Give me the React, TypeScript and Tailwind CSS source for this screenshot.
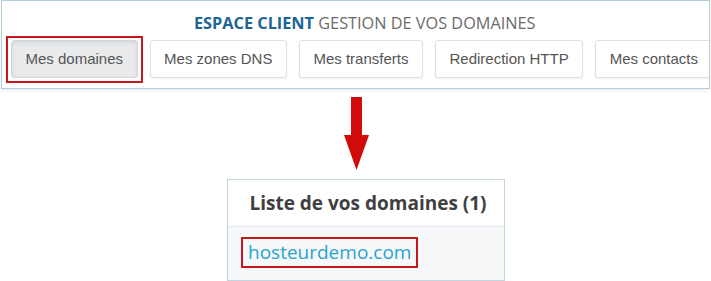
const tabs = [
  { label: 'Mes domaines', active: true },
  { label: 'Mes zones DNS' },
  { label: 'Mes transferts' },
  { label: 'Redirection HTTP' },
  { label: 'Mes contacts' },
];

export default function App() {
  return (
    <div className="relative w-[711px] h-[281px] bg-white overflow-hidden">
      {/* Top panel */}
      <div className="ml-[1px] w-[709px] h-[89px] border border-[#b3ccd9] bg-white overflow-hidden shadow-[0_2px_3px_rgba(0,0,0,0.06)]">
        <div
          className="pl-[192px] pt-[11px] h-[39px] text-[16.3px] leading-[22px] text-[#6b6b6b] whitespace-nowrap"
          style={{ fontFamily: '"Open Sans", sans-serif' }}
        >
          <span className="font-bold text-[#1d6497]">ESPACE CLIENT</span> GESTION DE VOS DOMAINES
        </div>
        <div className="flex items-center gap-[12px] pl-[9px]">
          {tabs.map((t) =>
            t.active ? (
              <div key={t.label} className="shrink-0 -mx-[5px] -mt-[4px] -mb-[5px] pt-[2px] pb-[3px] px-[3px] border-2 border-[#c8161d]">
                <div
                  className="h-[38px] px-[13.5px] flex items-center rounded-[3px] border border-[#cfd5d9] bg-[#e8eaeb] text-[#555] shadow-[inset_0_2px_4px_rgba(0,0,0,0.08)]"
                  style={{ fontFamily: '"Liberation Sans", Arial, sans-serif' }}
                >
                  <span className="text-[15px] whitespace-nowrap">{t.label}</span>
                </div>
              </div>
            ) : (
              <div
                key={t.label}
                className="shrink-0 h-[38px] px-[13.5px] flex items-center rounded-[3px] border border-[#dde1e4] bg-white text-[#555] shadow-[0_1px_2px_rgba(0,0,0,0.06)]"
                style={{ fontFamily: '"Liberation Sans", Arial, sans-serif' }}
              >
                <span className="text-[15px] whitespace-nowrap">{t.label}</span>
              </div>
            )
          )}
        </div>
      </div>

      {/* Arrow */}
      <div className="flex justify-center pl-[3px] pt-[8px]">
        <svg width="26" height="74" viewBox="0 0 26 74">
          <polygon points="7,0 18,0 18,38 25,38 12.5,73 0,38 7,38" fill="#d30a0a" />
        </svg>
      </div>

      {/* Domain list panel */}
      <div
        className="ml-[227px] mt-[8px] w-[278px] h-[102px] border border-[#c4d4de] bg-[#f6f8fa]"
        style={{ fontFamily: '"Open Sans", sans-serif' }}
      >
        <div className="h-[47px] bg-white border-b border-[#e3e9ee] flex items-center justify-center pl-[4px]">
          <span className="font-bold text-[19px] text-[#3f3f3f] whitespace-nowrap">Liste de vos domaines (1)</span>
        </div>
        <div className="pl-[13px] pt-[10px]">
          <span className="inline-flex items-center h-[31px] px-[5px] border-2 border-[#c8161d] text-[19px] text-[#2aa3cf] whitespace-nowrap">
            hosteurdemo.com
          </span>
        </div>
      </div>
    </div>
  );
}
